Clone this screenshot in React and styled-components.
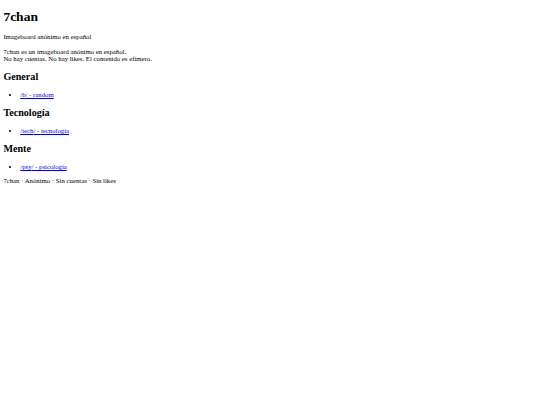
import React from 'react';
import styled, { createGlobalStyle } from 'styled-components';

const GlobalStyle = createGlobalStyle`
  html, body {
    background: #fff;
  }
  body {
    margin: 3.375px;
    font-family: 'Liberation Serif', 'Times New Roman', serif;
    font-size: 6.75px;
    line-height: 1.11;
    color: #000;
  }
`;

const Title = styled.h1`
  font-size: 2em;
  margin: 0.44em 0 0.67em;
`;

const Text = styled.p`
  margin: 1em 0;
`;

const SectionTitle = styled.h2`
  font-size: 1.5em;
  margin: 0.88em 0 0.83em;
`;

const BoardList = styled.ul`
  margin: 1em 0;
  padding-left: 2.5em;
`;

const BoardLink = styled.a`
  color: #0000ee;
  text-decoration: underline;
`;

const Footer = styled.footer`
  margin: 1em 0;
`;

const sections = [
  { title: 'General', boards: [{ slug: 'b', name: 'random' }] },
  { title: 'Tecnología', boards: [{ slug: 'tech', name: 'tecnología' }] },
  { title: 'Mente', boards: [{ slug: 'psy', name: 'psicología' }] },
];

const App = () => (
  <>
    <GlobalStyle />
    <header>
      <Title>7chan</Title>
      <Text>Imageboard anónimo en español</Text>
    </header>
    <main>
      <Text>
        7chan es un imageboard anónimo en español.
        <br />
        No hay cuentas. No hay likes. El contenido es efímero.
      </Text>
      {sections.map((section) => (
        <section key={section.title}>
          <SectionTitle>{section.title}</SectionTitle>
          <BoardList>
            {section.boards.map((board) => (
              <li key={board.slug}>
                <BoardLink href={`/${board.slug}/`}>
                  /{board.slug}/ - {board.name}
                </BoardLink>
              </li>
            ))}
          </BoardList>
        </section>
      ))}
    </main>
    <Footer>7chan · Anónimo · Sin cuentas · Sin likes</Footer>
  </>
);

export default App;
